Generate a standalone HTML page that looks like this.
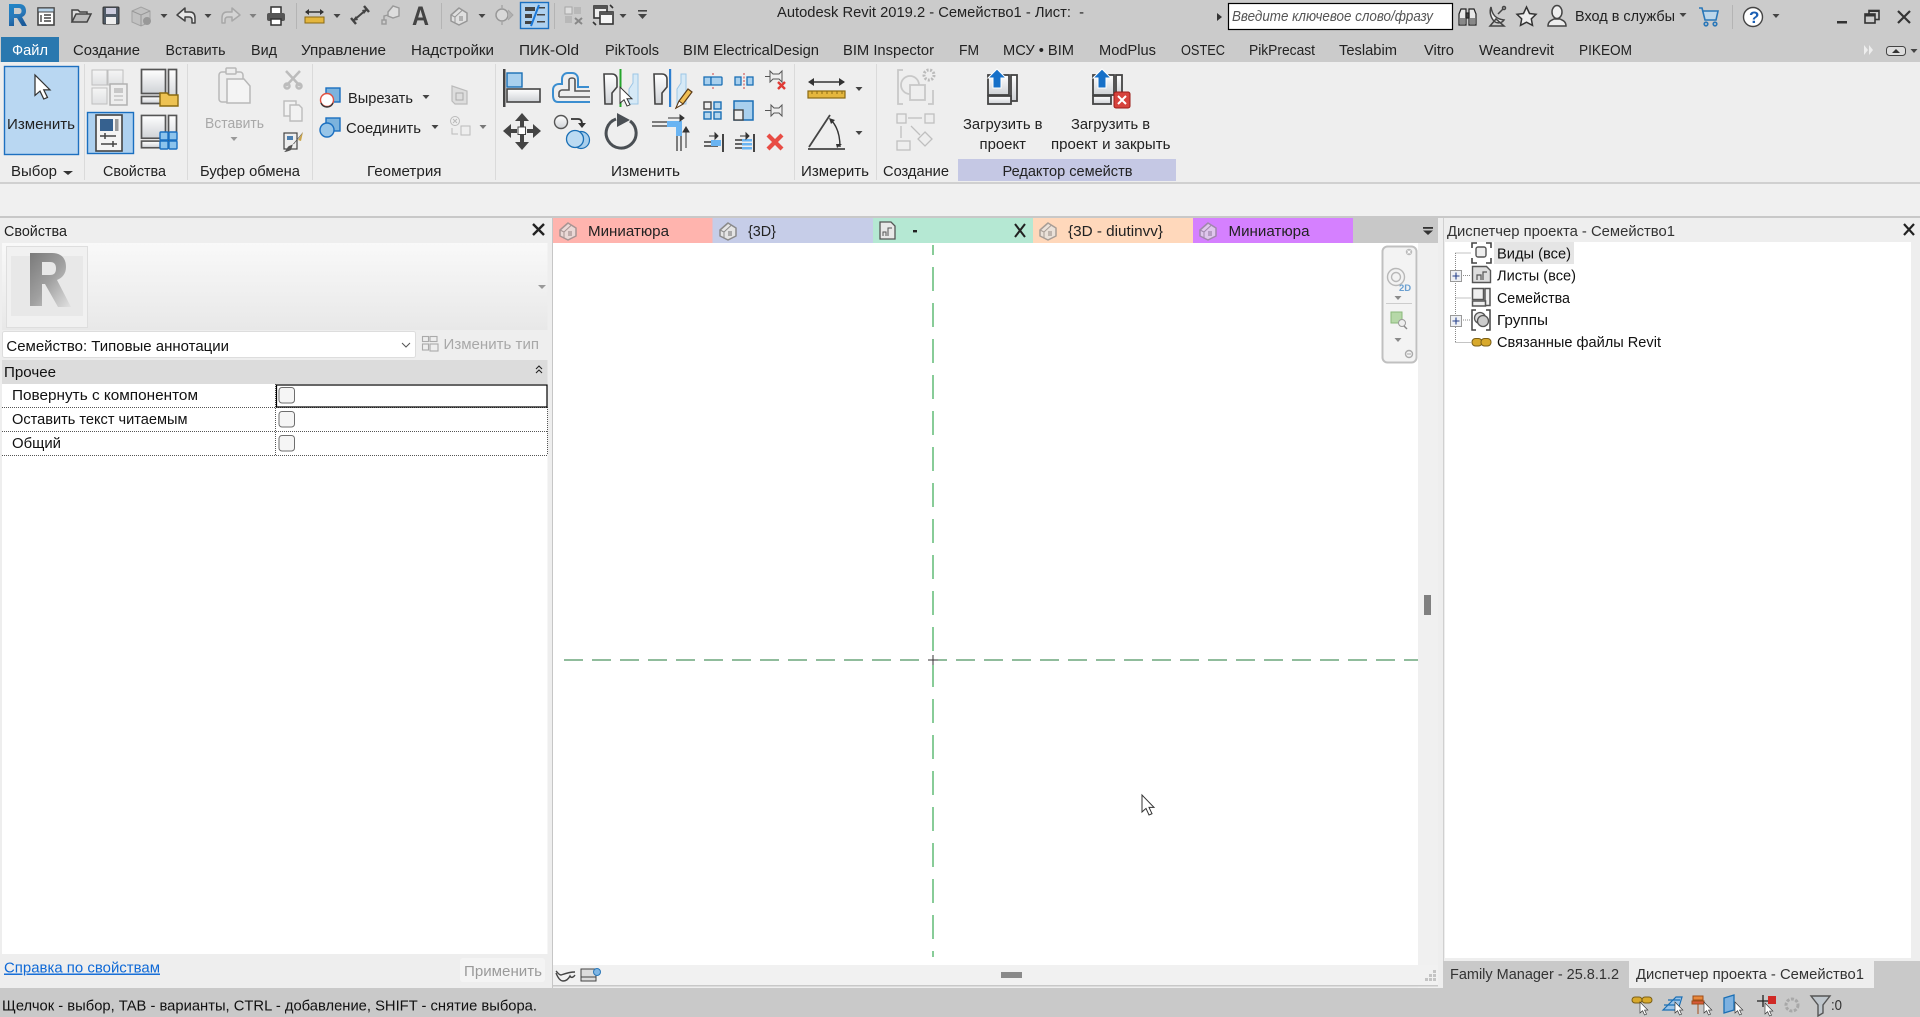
<!DOCTYPE html>
<html><head><meta charset="utf-8"><title>Revit</title>
<style>
html,body{margin:0;padding:0;background:#eee;overflow:hidden}
svg{display:block}
text{font-family:"Liberation Sans","DejaVu Sans",sans-serif;font-size:14.5px;fill:#222}
</style></head><body>
<svg xmlns="http://www.w3.org/2000/svg" width="1920" height="1017" viewBox="0 0 1920 1017">
<defs>
<linearGradient id="m" x1="0" y1="0" x2="0" y2="1"><stop offset="0" stop-color="#fff"/><stop offset="1" stop-color="#cfd2d6"/></linearGradient>
<linearGradient id="b" x1="0" y1="0" x2="0" y2="1"><stop offset="0" stop-color="#d3e6f5"/><stop offset="1" stop-color="#8fbfe6"/></linearGradient>
<linearGradient id="r" x1="0" y1="0" x2="0.4" y2="1"><stop offset="0" stop-color="#1f86c8"/><stop offset=".6" stop-color="#2a78b8"/><stop offset="1" stop-color="#1a5a9a"/></linearGradient>
<linearGradient id="pv" x1="0" y1="0" x2="0" y2="1"><stop offset="0" stop-color="#f9f9f9"/><stop offset="1" stop-color="#e8e8e8"/></linearGradient>
<linearGradient id="gr" x1="0" y1="0" x2="1" y2="1"><stop offset="0" stop-color="#7a7a7a"/><stop offset=".5" stop-color="#a0a0a0"/><stop offset="1" stop-color="#e2e2e2"/></linearGradient>
<path id="tri" d="M-3.500 0H3.500L0 4Z" fill="#444"/>
<path id="cur" d="M0 0V17L4 13.400 7 20 10 18.700 7 12.400H12Z" fill="#fff" stroke="#333" stroke-width="1"/>
<g id="house"><path d="M1 9 9 2 17 7V15L9 19 1 15Z" fill="#e4e4e4" stroke="#8a8a8a" stroke-width="1.500" stroke-linejoin="round"/><path d="M1 9 5 11 12 4.500M5 11V17" fill="none" stroke="#8a8a8a" stroke-width="1"/><rect x="9" y="10" width="4" height="5" fill="#aaa"/></g>
<g id="famL"><rect x="1" y="1" width="24" height="24" fill="url(#m)" stroke="#555" stroke-width="1.700"/><rect x="28" y="1" width="8" height="31" fill="url(#m)" stroke="#555" stroke-width="1.700"/><rect x="1" y="28" width="27" height="7" fill="url(#m)" stroke="#555" stroke-width="1.700"/></g>
<g id="upar"><path d="M9 0 18 9H13V19H5V9H0Z" fill="#1670c8" stroke="#fff" stroke-width="1"/></g>
</defs>

<!-- base -->
<rect width="1920" height="1017" fill="#eeeeee"/>
<rect width="1920" height="62" fill="#cbcbcb"/>
<rect y="62" width="1920" height="120" fill="#eeeeee"/>
<rect y="182" width="1920" height="2" fill="#d0d0d0"/>
<rect y="184" width="1920" height="32" fill="#f0f0f0"/>
<rect y="216" width="1920" height="2" fill="#c8c8c8"/>

<!-- quick access -->
<path d="M9 4h10c5 0 7 3 7 7 0 3-1.500 5-4 6l5 9h-5l-5-8h-3v8H9zM14 8v6h4.500c2 0 3-1 3-3s-1-3-3-3z" fill="url(#r)" fill-rule="evenodd"/>
<g><rect x="38" y="8" width="16" height="17" fill="#fff" stroke="#444" stroke-width="1.600"/><rect x="38" y="8" width="16" height="4" fill="#b8d4ea" stroke="#444"/><path d="M41 15v7M44 15h7M44 18h7M44 21h7" stroke="#444" stroke-width="1.400"/></g>
<g><path d="M72 22V10h6l2 2h7v3" fill="#ddd" stroke="#444" stroke-width="1.500"/><path d="M72 22l4-8h15l-4 8z" fill="#bbb" stroke="#444" stroke-width="1.500"/></g>
<g><rect x="103" y="7" width="16" height="17" rx="1" fill="#4f5a66" stroke="#333"/><rect x="106" y="8" width="10" height="6" fill="#ccd"/><rect x="106" y="17" width="10" height="7" fill="#eee"/></g>
<g opacity=".6"><path d="M132 11 141 7 150 11V22L141 26 132 22Z" fill="#bbb" stroke="#888"/><path d="M132 11 141 15 150 11M141 15V26" stroke="#777" fill="none"/><circle cx="147" cy="21" r="4" fill="#777"/></g>
<use href="#tri" x="164" y="14"/>
<path d="M177 15 185 8V12H190C194 12 195 15 195 18V23H192V20C192 18 191 17 189 17H185V21Z" fill="#e8e8e8" stroke="#444" stroke-width="1.500" stroke-linejoin="round"/>
<use href="#tri" x="208" y="14"/>
<path d="M240 15 232 8V12H227C223 12 222 15 222 18V23H225V20C225 18 226 17 228 17H232V21Z" fill="#d4d4d4" stroke="#a8a8a8" stroke-width="1.500" stroke-linejoin="round"/>
<use href="#tri" x="253" y="14" opacity=".55"/>
<g><rect x="271" y="7" width="10" height="7" fill="#fff" stroke="#333" stroke-width="1.500"/><rect x="267" y="13" width="18" height="8" rx="2" fill="#555"/><rect x="271" y="19" width="10" height="6" fill="#fff" stroke="#333" stroke-width="1.500"/></g>
<rect x="296" y="3" width="1" height="26" fill="#b4b4b4"/>
<g><path d="M306 12h17" stroke="#333" stroke-width="1.600"/><path d="M305 12l4-3v6zM324 12l-4-3v6z" fill="#333"/><rect x="305" y="17" width="19" height="6" fill="#e4b63e" stroke="#8a6a14"/></g>
<use href="#tri" x="337" y="14"/>
<g stroke="#444" stroke-width="2"><path d="M353 21 367 9"/><path d="M351 18l5 6M364 6l5 6" stroke-width="2.400"/></g>
<path d="M352 21l6-1-2-4zM368 9l-6 1 2 4z" fill="#444"/>
<g fill="none" stroke="#999" stroke-width="1.400"><path d="M384 22V16l4-1"/><rect x="382" y="20" width="4" height="4" fill="#ccc"/><path d="M388 12l5-6 6 2v8l-6 2-5-2z" fill="#ddd"/></g>
<text x="412" y="25" style="font-size:27px;font-weight:bold;fill:#444" textLength="17" lengthAdjust="spacingAndGlyphs">A</text>
<rect x="441" y="3" width="1" height="26" fill="#b4b4b4"/>
<use href="#house" x="450" y="6" opacity=".8"/>
<use href="#tri" x="482" y="14"/>
<g opacity=".75"><circle cx="502" cy="15" r="6" fill="#ddd" stroke="#888" stroke-width="1.500"/><path d="M508 10l5 5-5 5" fill="#aaa" stroke="#999"/><path d="M502 5v4M502 21v4" stroke="#999" stroke-width="1.400"/></g>
<rect x="520.500" y="2.500" width="28" height="26" fill="#aed1f0" stroke="#1a6fc0" stroke-width="1.400"/>
<g fill="#444"><rect x="525" y="7" width="10" height="4"/><rect x="525" y="14" width="7" height="4"/><rect x="525" y="21" width="7" height="3"/><rect x="537" y="7" width="8" height="1.500"/><rect x="537" y="14" width="8" height="1.500"/><rect x="537" y="21" width="8" height="1.500"/></g>
<path d="M539 5 531 26" stroke="#1a78d8" stroke-width="2"/>
<rect x="554" y="3" width="1" height="26" fill="#b4b4b4"/>
<g opacity=".55"><rect x="565" y="7" width="7" height="7" fill="#eee" stroke="#888"/><rect x="574" y="7" width="7" height="7" fill="#aaa"/><rect x="565" y="16" width="7" height="7" fill="#aaa"/></g>
<path d="M575 18l7 6M582 18l-7 6" stroke="#888" stroke-width="2"/>
<g fill="none" stroke="#333" stroke-width="1.600"><rect x="594" y="6" width="13" height="12" fill="#eee"/><rect x="600" y="12" width="13" height="12" fill="#f6f6f6"/><path d="M610 5l3 3M593 22l3 3"/></g>
<rect x="600" y="12" width="13" height="3" fill="#555"/><rect x="594" y="6" width="13" height="3" fill="#555"/>
<use href="#tri" x="623" y="14"/>
<rect x="638" y="10" width="9" height="1.600" fill="#444"/><path d="M638 14h9l-4.500 5z" fill="#444"/>

<!-- title -->
<text x="777" y="17" textLength="307" lengthAdjust="spacingAndGlyphs">Autodesk Revit 2019.2 - Семейство1 - Лист:&#160;&#160;-</text>
<path d="M1217 13l5 4-5 4z" fill="#333"/>
<rect x="1228.500" y="3.500" width="224" height="26" fill="#fff" stroke="#000" stroke-width="1.200"/>
<text x="1232" y="21" style="font-style:italic;fill:#555" textLength="201" lengthAdjust="spacingAndGlyphs">Введите ключевое слово/фразу</text>
<g stroke="#222" stroke-width="1.200" fill="#e8e8e8"><path d="M1459 14l2-5h5v16h-7zM1476 14l-2-5h-5v16h7z"/><rect x="1466" y="13" width="3" height="5" fill="#444"/></g>
<path d="M1460 18h5v6h-5zM1470 18h5v6h-5z" fill="#888"/>
<g fill="none" stroke="#444" stroke-width="1.500"><path d="M1491 7c1 8 5 12 13 13-2 3-7 4-10 1-3-3-5-9-3-14z" fill="#eee"/><path d="M1490 26l6-7 8 7zM1498 14l5-5"/><circle cx="1504" cy="8" r="1.500"/></g>
<path d="M1526.500 7l3 6.500 6.500.8-4.700 4.600 1.200 6.500-6-3.200-6 3.200 1.200-6.500-4.700-4.600 6.500-.8z" fill="#eee" stroke="#333" stroke-width="1.500"/>
<g fill="none" stroke="#444" stroke-width="1.500"><ellipse cx="1557" cy="12" rx="5" ry="6.500" fill="#eee"/><path d="M1548 26c0-5 4-6 6-7h6c2 1 6 2 6 7z" fill="#eee"/></g>
<text x="1575" y="21" textLength="100" lengthAdjust="spacingAndGlyphs">Вход в службы</text>
<use href="#tri" x="1683" y="13"/>
<g fill="none" stroke="#2a77b8" stroke-width="1.600"><path d="M1699 8h3l3 12h11l2-9h-15" fill="#bcd6ea"/><circle cx="1706" cy="24" r="1.800"/><circle cx="1715" cy="24" r="1.800"/></g>
<rect x="1732" y="5" width="1" height="24" fill="#b4b4b4"/>
<circle cx="1753" cy="17" r="9.500" fill="#fff" stroke="#444" stroke-width="1.400"/>
<text x="1749" y="23" style="font-size:17px;font-weight:bold;fill:#1a5fb4">?</text>
<use href="#tri" x="1776" y="14"/>
<rect x="1837" y="21" width="10" height="2.500" fill="#333"/>
<g fill="none" stroke="#333" stroke-width="1.600"><rect x="1869" y="10.500" width="10" height="9"/><rect x="1865" y="14" width="10" height="9" fill="#cbcbcb"/></g>
<rect x="1865" y="14" width="10" height="2.500" fill="#333"/><rect x="1869" y="10" width="10" height="2" fill="#333"/>
<path d="M1898 11l12 12M1910 11l-12 12" stroke="#333" stroke-width="2.200"/>

<!-- menu tabs -->
<rect x="1" y="37" width="58" height="25" fill="#2a78af"/>
<text x="12" y="55" style="fill:#fff" textLength="36" lengthAdjust="spacingAndGlyphs">Файл</text>
<g>
<text x="73" y="55" textLength="67" lengthAdjust="spacingAndGlyphs">Создание</text>
<text x="165.500" y="55" textLength="60" lengthAdjust="spacingAndGlyphs">Вставить</text>
<text x="251" y="55" textLength="26" lengthAdjust="spacingAndGlyphs">Вид</text>
<text x="301" y="55" textLength="85" lengthAdjust="spacingAndGlyphs">Управление</text>
<text x="411" y="55" textLength="83" lengthAdjust="spacingAndGlyphs">Надстройки</text>
<text x="519" y="55" textLength="60" lengthAdjust="spacingAndGlyphs">ПИК-Old</text>
<text x="605" y="55" textLength="54" lengthAdjust="spacingAndGlyphs">PikTools</text>
<text x="683" y="55" textLength="136" lengthAdjust="spacingAndGlyphs">BIM ElectricalDesign</text>
<text x="843" y="55" textLength="91" lengthAdjust="spacingAndGlyphs">BIM Inspector</text>
<text x="959" y="55" textLength="20" lengthAdjust="spacingAndGlyphs">FM</text>
<text x="1003" y="55" textLength="71" lengthAdjust="spacingAndGlyphs">МСУ • BIM</text>
<text x="1099" y="55" textLength="57" lengthAdjust="spacingAndGlyphs">ModPlus</text>
<text x="1181" y="55" textLength="44" lengthAdjust="spacingAndGlyphs">OSTEC</text>
<text x="1249" y="55" textLength="66" lengthAdjust="spacingAndGlyphs">PikPrecast</text>
<text x="1339" y="55" textLength="58" lengthAdjust="spacingAndGlyphs">Teslabim</text>
<text x="1424" y="55" textLength="30" lengthAdjust="spacingAndGlyphs">Vitro</text>
<text x="1479" y="55" textLength="75" lengthAdjust="spacingAndGlyphs">Weandrevit</text>
<text x="1579" y="55" textLength="53" lengthAdjust="spacingAndGlyphs">PIKEOM</text>
</g>
<path d="M1864 45l4 5-4 5zM1869 45l4 5-4 5z" fill="#eee"/>
<rect x="1886.500" y="46.500" width="19" height="9" rx="3" fill="#ddd" stroke="#444"/><path d="M1892 53h8l-4-4z" fill="#333"/>
<use href="#tri" x="1914" y="49"/>

<!-- ribbon separators -->
<g fill="#dadada"><rect x="84" y="64" width="1" height="116"/><rect x="187" y="64" width="1" height="116"/><rect x="312" y="64" width="1" height="116"/><rect x="495" y="64" width="1" height="116"/><rect x="794" y="64" width="1" height="116"/><rect x="876" y="64" width="1" height="116"/></g>

<!-- Выбор -->
<rect x="4.500" y="66.500" width="74" height="88" fill="#b9d7f2" stroke="#1e70c0" stroke-width="1.400"/>
<use href="#cur" transform="translate(35 75) scale(1.250 1.200)"/>
<text x="7" y="129" textLength="68" lengthAdjust="spacingAndGlyphs">Изменить</text>
<text x="11" y="176" textLength="46" lengthAdjust="spacingAndGlyphs">Выбор</text>
<path d="M63 171h10l-5 4z" fill="#333"/>

<!-- Свойства -->
<g opacity=".45"><rect x="92" y="70" width="15" height="15" fill="url(#m)" stroke="#888"/><rect x="108" y="70" width="15" height="15" fill="url(#m)" stroke="#888"/><rect x="92" y="88" width="15" height="16" fill="url(#m)" stroke="#888"/><rect x="110" y="84" width="17" height="21" fill="#eee" stroke="#666" stroke-width="1.500"/><path d="M114 96h9M114 100h9" stroke="#666"/><rect x="114" y="88" width="9" height="5" fill="#999"/></g>
<use href="#famL" transform="translate(140.500 68.500)"/>
<path d="M160 93h7l2 2h9v11h-18z" fill="#edc252" stroke="#8a6a10" stroke-width="1.400"/>
<rect x="87.500" y="112.500" width="46" height="41" fill="#aed1f0" stroke="#1a6fc0" stroke-width="1.400"/>
<rect x="96" y="115" width="26" height="36" fill="#f4f4f4" stroke="#444" stroke-width="1.600"/>
<rect x="100" y="119" width="13" height="12" fill="#36618f"/><rect x="115" y="119" width="3.500" height="12" fill="#999"/>
<g stroke="#444" stroke-width="1.500"><path d="M100 136h16M101 144h16M105 133v6M113 141v6"/></g>
<use href="#famL" transform="translate(140.500 114.500) scale(1 .95)"/>
<g fill="#8cc3ec" stroke="#1a6fc0" stroke-width="1.400"><rect x="160" y="132" width="8" height="8" rx="1"/><rect x="169" y="132" width="8" height="8" rx="1"/><rect x="160" y="141" width="8" height="8" rx="1"/><rect x="169" y="141" width="8" height="8" rx="1"/></g>
<text x="103" y="176" textLength="63" lengthAdjust="spacingAndGlyphs">Свойства</text>

<!-- Буфер -->
<g fill="#eee" stroke="#b8b8b8" stroke-width="1.500"><rect x="219" y="72" width="24" height="30" rx="3"/><rect x="226" y="68" width="10" height="6" rx="1"/><path d="M227 79h17l6 7v17h-23z" fill="#f4f4f4"/></g>
<text x="205" y="128" style="fill:#a8a8a8" textLength="59" lengthAdjust="spacingAndGlyphs">Вставить</text>
<use href="#tri" x="234" y="137" opacity=".5"/>
<g stroke="#bcbcbc" stroke-width="2.500" fill="none"><path d="M286 71 300 86M300 71 286 86"/><circle cx="287" cy="86" r="2.500"/><circle cx="299" cy="86" r="2.500"/></g>
<g fill="#f2f2f2" stroke="#bcbcbc" stroke-width="1.400"><rect x="284" y="101" width="12" height="15"/><path d="M290 105h9l3 3v13h-12z"/></g>
<rect x="284" y="133" width="13" height="16" fill="#eee" stroke="#444" stroke-width="1.200"/><rect x="287" y="136" width="6" height="4" fill="#4c7fb0"/>
<path d="M303 132 293 144l-2 6c-2 1-5 2-7 2 3-2 3-5 5-6 3-1 4-2 5-2l8-10z" fill="#555"/><path d="M303 132l-5 8 3 1z" fill="#caa44a"/>
<text x="200" y="176" textLength="100" lengthAdjust="spacingAndGlyphs">Буфер обмена</text>

<!-- Геометрия -->
<rect x="326" y="88" width="14" height="14" fill="#7cb3dd" stroke="#1a6fc0" stroke-width="1.400"/>
<circle cx="327" cy="100" r="6.500" fill="#fff" stroke="#e05040" stroke-width="1.400"/>
<path d="M321 103a6.500 6.500 0 0 0 12 0" fill="none" stroke="#333" stroke-width="1.400"/>
<text x="348" y="103" textLength="65" lengthAdjust="spacingAndGlyphs">Вырезать</text>
<use href="#tri" x="426" y="95"/>
<path d="M452 86l15 5v13h-12l-3-3z" fill="#ddd" stroke="#bbb" stroke-width="1.200"/><rect x="456" y="93" width="7" height="7" fill="none" stroke="#aaa"/>
<rect x="326" y="118" width="14" height="13" fill="#7cb3dd" stroke="#1a6fc0" stroke-width="1.400"/>
<circle cx="327" cy="130" r="7" fill="#97c5e8" stroke="#1a6fc0" stroke-width="1.400"/>
<text x="346" y="133" textLength="75" lengthAdjust="spacingAndGlyphs">Соединить</text>
<use href="#tri" x="435" y="125"/>
<circle cx="455" cy="121" r="4.500" fill="#eee" stroke="#bbb"/><path d="M453 119l4 4M457 119l-4 4" stroke="#bbb"/><rect x="461" y="126" width="9" height="9" fill="#eee" stroke="#bbb"/><path d="M452 128v6h6" fill="none" stroke="#bbb"/>
<use href="#tri" x="483" y="125" opacity=".7"/>
<text x="367" y="176" textLength="74.500" lengthAdjust="spacingAndGlyphs">Геометрия</text>

<!-- Изменить: big -->
<rect x="503" y="69" width="2.500" height="38" fill="#444"/>
<rect x="507" y="73" width="15" height="14" fill="#a9d0ee" stroke="#1a6fb5" stroke-width="1.400"/>
<rect x="507" y="89" width="33" height="13" fill="url(#m)" stroke="#444" stroke-width="1.600"/>
<path d="M553 95v-5c0-4 3-6 6-6h3v-5c0-3 2-6 6-6h4c4 0 6 3 6 6v8h11M590 102h-32c-4 0-5-3-5-7" fill="none" stroke="#3b8ed0" stroke-width="2"/>
<path d="M559 97v-4c0-2 2-3 3-3h7v-10c0-1 1-2 3-2s3 1 3 2v11h15M590 97h-31" fill="none" stroke="#555" stroke-width="1.600"/>
<path d="M604 74h8c3 0 5 2 5 5v8l-5 6v11h-7z" fill="url(#m)" stroke="#444" stroke-width="1.600"/>
<path d="M638 74v30h-9V89l4-6v-9z" fill="#d6e9f6" stroke="#9cc6e6"/>
<rect x="619.500" y="69" width="2" height="38" fill="#26a52c"/>
<use href="#cur" transform="translate(620 87) scale(1 .95)"/>
<path d="M654 74h8c3 0 5 2 5 5v8l-5 6v11h-7z" fill="url(#m)" stroke="#444" stroke-width="1.600"/>
<path d="M686 74v30h-9V89l4-6v-9z" fill="#d6e9f6" stroke="#9cc6e6"/>
<rect x="669" y="69" width="2.200" height="38" fill="#2d7fd0"/>
<path d="M676 108l3-7 9-12 4 3-9 12z" fill="#f0bf55" stroke="#5c3b18" stroke-width="1.200"/><path d="M676 108l3-7 4 3z" fill="#fff" stroke="#5c3b18"/>
<!-- move -->
<g fill="#444"><path d="M522 113l7 8h-5v8h-4v-8h-5z"/><path d="M522 150l7-8h-5v-8h-4v8h-5z"/><path d="M503 131l8-7v5h6v4h-6v5z"/><path d="M541 131l-8-7v5h-6v4h6v5z"/></g>
<rect x="518" y="127" width="7.500" height="7.500" fill="#fff" stroke="#444"/>
<!-- copy -->
<circle cx="561" cy="122" r="6.500" fill="url(#m)" stroke="#555" stroke-width="1.400"/>
<path d="M571 119h7c3 0 4 2 4 5v1" fill="none" stroke="#333" stroke-width="1.800"/><path d="M578 123h8l-4 5z" fill="#333"/>
<circle cx="581" cy="140" r="8.500" fill="#a9cfec" stroke="#1a6fb5" stroke-width="1.200"/>
<circle cx="575" cy="139" r="8.500" fill="#bcdbf2" stroke="#1a6fb5" stroke-width="1.300"/>
<!-- rotate -->
<path d="M630 121A15 15 0 1 1 616 119" fill="none" stroke="#4a4f54" stroke-width="3"/>
<path d="M617 113l13 7-13 7z" fill="#4a4f54"/>
<!-- trim -->
<g fill="none" stroke="#555" stroke-width="1.500"><path d="M652 122h28M652 126h28"/><path d="M677 131V151M681 131V151"/></g>
<rect x="667" y="121" width="11" height="6" fill="#6ab4f2"/><rect x="676" y="121" width="6" height="15" fill="#6ab4f2"/>
<path d="M668 118h16M684 118l-4-3v6z" stroke="#333" fill="#333"/><path d="M686 148V129M686 127l-3 5h6z" stroke="#333" fill="#333"/>
<!-- small grid -->
<g stroke="#d04040" stroke-width="1" stroke-dasharray="2 1.500"><path d="M713 73V90M744 73V90"/></g>
<rect x="704" y="77" width="7" height="8" fill="#a9d0ee" stroke="#1a6fb5" stroke-width="1.300"/><rect x="711" y="77" width="11" height="8" fill="#a9d0ee" stroke="#1a6fb5" stroke-width="1.300" rx="1"/>
<rect x="735" y="77" width="6" height="8" fill="#a9d0ee" stroke="#1a6fb5" stroke-width="1.300"/><rect x="747" y="77" width="6" height="8" fill="#a9d0ee" stroke="#1a6fb5" stroke-width="1.300"/>
<path d="M770 71l3 3h6l3-3v11l-3-3h-6l-3 3z" fill="#eee" stroke="#555"/><path d="M765 76.500h5" stroke="#555"/>
<path d="M778 82l7 7M785 82l-7 7" stroke="#e03a35" stroke-width="2.400"/>
<g fill="#b5d6ee" stroke="#1a6fb5" stroke-width="1.400"><rect x="704" y="102" width="7" height="7" fill="#eee" stroke="#444"/><rect x="714" y="102" width="7" height="7"/><rect x="704" y="112" width="7" height="7"/><rect x="714" y="112" width="7" height="7"/></g>
<rect x="734" y="101" width="19" height="19" fill="#a9d0ee" stroke="#1a6fb5" stroke-width="1.500"/><rect x="734" y="110" width="9" height="10" fill="#eee" stroke="#444" stroke-width="1.400"/>
<path d="M771 105l3 3h5l3-3v11l-3-3h-5l-3 3z" fill="#eee" stroke="#555"/><path d="M765 110.500h6" stroke="#555"/>
<g><path d="M704 142h14" stroke="#666" stroke-width="2"/><path d="M704 146h14" stroke="#666" stroke-width="2"/><rect x="711" y="140" width="10" height="6" fill="#6ab4f2"/><rect x="722" y="134" width="2" height="18" fill="#444"/><path d="M709 136h9M718 136l-3-3v6z" stroke="#333" fill="#333"/></g>
<g><path d="M735 140h14M735 144h14M735 148h14" stroke="#666" stroke-width="2"/><rect x="742" y="139" width="10" height="2.500" fill="#6ab4f2"/><rect x="742" y="143" width="10" height="2.500" fill="#6ab4f2"/><rect x="742" y="147" width="10" height="2.500" fill="#6ab4f2"/><rect x="753" y="134" width="2" height="18" fill="#444"/><path d="M740 136h9M749 136l-3-3v6z" stroke="#333" fill="#333"/></g>
<path d="M768 135l14 14M782 135l-14 14" stroke="#e84c44" stroke-width="4.200"/>
<text x="611" y="176" textLength="69" lengthAdjust="spacingAndGlyphs">Изменить</text>

<!-- Измерить -->
<path d="M810 82h34" stroke="#333" stroke-width="1.600"/><path d="M808 82l6-4v8zM845 82l-6-4v8z" fill="#333"/>
<rect x="808" y="91" width="37" height="7" fill="#e4b63e" stroke="#8a6a14" stroke-width="1.200"/>
<path d="M812 91v3M817 91v3M822 91v3M827 91v3M832 91v3M837 91v3M842 91v3" stroke="#8a6a14"/>
<use href="#tri" x="859" y="87"/>
<path d="M808 149h37M809 147 830 115" stroke="#444" stroke-width="1.800" fill="none"/>
<path d="M831 120c6 6 9 16 9 27" fill="none" stroke="#333" stroke-width="1.400"/><path d="M829 118l6 2-4 4zM837 148l5-4h-6z" fill="#333"/>
<use href="#tri" x="859" y="131"/>
<text x="801" y="176" textLength="68" lengthAdjust="spacingAndGlyphs">Измерить</text>

<!-- Создание -->
<g opacity=".55" fill="none" stroke="#aaa" stroke-width="1.800"><path d="M903 70h-5v34h5M928 104h5v-14"/><circle cx="910" cy="85" r="9"/><rect x="910" y="85" width="15" height="15" fill="#eee"/></g>
<circle cx="929" cy="75" r="5" fill="none" stroke="#bbb" stroke-width="3" stroke-dasharray="2 1.500"/>
<g opacity=".55" fill="#eee" stroke="#999" stroke-width="1.300"><rect x="897" y="114" width="9" height="9"/><rect x="925" y="114" width="9" height="9"/><rect x="897" y="141" width="13" height="9"/><path d="M925 132l7 7-7 7-7-7z"/><path d="M908 118h14M901 126v12M911 126l9 9"/></g>
<text x="883" y="176" textLength="66" lengthAdjust="spacingAndGlyphs">Создание</text>

<!-- Загрузить -->
<rect x="958" y="159" width="218" height="22" fill="#c5c8e4"/>
<text x="1002.500" y="176" textLength="130" lengthAdjust="spacingAndGlyphs">Редактор семейств</text>
<g fill="url(#m)" stroke="#444" stroke-width="1.800"><rect x="988" y="75" width="21" height="20"/><rect x="1011" y="75" width="6" height="26"/><rect x="988" y="96" width="23" height="8"/></g>
<use href="#upar" transform="translate(988 69)"/>
<text x="963" y="129" textLength="79.500" lengthAdjust="spacingAndGlyphs">Загрузить в</text>
<text x="979.500" y="149" textLength="46.500" lengthAdjust="spacingAndGlyphs">проект</text>
<g fill="url(#m)" stroke="#444" stroke-width="1.800"><rect x="1093" y="75" width="21" height="20"/><rect x="1116" y="75" width="6" height="20"/><rect x="1093" y="96" width="18" height="8"/></g>
<use href="#upar" transform="translate(1093 69)"/>
<rect x="1114" y="92" width="16" height="16" rx="2" fill="#d6423c" stroke="#9c1c18"/>
<path d="M1118 96l8 8M1126 96l-8 8" stroke="#fff" stroke-width="2"/>
<text x="1071" y="129" textLength="79" lengthAdjust="spacingAndGlyphs">Загрузить в</text>
<text x="1051" y="149" textLength="119.500" lengthAdjust="spacingAndGlyphs">проект и закрыть</text>

<!-- Properties panel -->
<text x="4" y="236" textLength="63" lengthAdjust="spacingAndGlyphs">Свойства</text>
<path d="M533 224l11 11M544 224l-11 11" stroke="#222" stroke-width="2.400"/>
<rect x="2" y="243" width="545.500" height="87" fill="url(#pv)"/>
<rect x="6.500" y="246.500" width="81" height="81" fill="#f1f1f1" stroke="#dedede"/>
<rect x="11" y="256" width="72" height="60" fill="#e6e6e6" opacity=".8"/>
<path d="M30 253h22c9 0 14 5 14 14 0 7-4 11-9 13l14 27H58L45 284h-3v22H30zM42 262v13h8c4 0 6-2 6-6.500s-2-6.500-6-6.500z" fill="url(#gr)" fill-rule="evenodd"/>
<path d="M538 285h8l-4 4z" fill="#999"/>
<rect x="2.500" y="331.500" width="413" height="26" rx="2" fill="#fff" stroke="#ddd"/>
<text x="6.400" y="351" style="fill:#111" textLength="222.600" lengthAdjust="spacingAndGlyphs">Семейство: Типовые аннотации</text>
<path d="M402 343l4 4 4-4" fill="none" stroke="#555"/>
<g fill="none" stroke="#aaa" stroke-width="1.100"><rect x="422.500" y="336.500" width="6" height="5"/><rect x="430" y="336.500" width="7" height="5"/><rect x="422.500" y="344" width="6" height="6"/><rect x="430" y="344" width="8" height="7"/></g>
<text x="443.500" y="349" style="fill:#a8a8a8" textLength="95.500" lengthAdjust="spacingAndGlyphs">Изменить тип</text>
<rect x="2" y="360" width="545.500" height="24" fill="#dcdcdc"/>
<text x="4" y="377" style="fill:#111" textLength="52" lengthAdjust="spacingAndGlyphs">Прочее</text>
<path d="M536 369l3-3 3 3M536 373l3-3 3 3" fill="none" stroke="#222" stroke-width="1.100"/>
<rect x="2" y="384" width="545.500" height="570" fill="#fff"/>
<g stroke="#555" stroke-width="1" stroke-dasharray="1 1"><path d="M2 407.500H547M2 431.500H547M2 455.500H547M275.500 384V455M547.500 407V455"/></g>
<rect x="276.500" y="385" width="270.500" height="22" fill="#fff" stroke="#000" stroke-width="1.200"/>
<text x="12" y="400" style="fill:#111" textLength="186" lengthAdjust="spacingAndGlyphs">Повернуть с компонентом</text>
<text x="12" y="424" style="fill:#111" textLength="175.500" lengthAdjust="spacingAndGlyphs">Оставить текст читаемым</text>
<text x="12" y="448" style="fill:#111" textLength="49" lengthAdjust="spacingAndGlyphs">Общий</text>
<g fill="#f5f5f5" stroke="#6e6e6e" stroke-width="1"><rect x="279" y="387.500" width="15.500" height="15.500" rx="3"/><rect x="279" y="411.500" width="15.500" height="15.500" rx="3"/><rect x="279" y="435.500" width="15.500" height="15.500" rx="3"/></g>
<text x="4" y="972.500" style="fill:#0f69d6;text-decoration:underline" textLength="156" lengthAdjust="spacingAndGlyphs">Справка по свойствам</text>
<rect x="460" y="958" width="85" height="24" rx="3" fill="#f4f4f4"/>
<text x="464" y="976" style="fill:#9a9a9a" textLength="78" lengthAdjust="spacingAndGlyphs">Применить</text>

<!-- View area -->
<rect x="552" y="218" width="1" height="770" fill="#c6c6c6"/>
<rect x="553" y="218" width="885" height="25" fill="#c8c8c8"/>
<rect x="553" y="218" width="159.500" height="25" fill="#ffb4ae"/>
<rect x="712.500" y="218" width="160.500" height="25" fill="#c6cde8"/>
<rect x="873" y="218" width="160" height="25" fill="#b5e8d3"/>
<rect x="1033" y="218" width="160" height="25" fill="#ffd8bb"/>
<rect x="1193" y="218" width="160" height="25" fill="#d580ff"/>
<use href="#house" transform="translate(559 221)" opacity=".75"/>
<use href="#house" transform="translate(719 221)"/>
<use href="#house" transform="translate(1039 221)" opacity=".75"/>
<use href="#house" transform="translate(1199 221)" opacity=".7"/>
<path d="M880 222h11l4 4v13h-15z" fill="#e8e8e8" stroke="#555" stroke-width="1.300"/><path d="M883 236v-4h3v4M888 236v-8h4" fill="none" stroke="#555"/>
<text x="588" y="236" textLength="81" lengthAdjust="spacingAndGlyphs">Миниатюра</text>
<text x="748" y="236" textLength="28" lengthAdjust="spacingAndGlyphs">{3D}</text>
<rect x="913" y="230" width="4" height="2.400" fill="#222"/>
<path d="M1015 224l10 13M1025 224l-10 13" stroke="#222" stroke-width="2"/>
<text x="1068" y="236" textLength="95" lengthAdjust="spacingAndGlyphs">{3D - diutinvv}</text>
<text x="1228.500" y="236" textLength="81" lengthAdjust="spacingAndGlyphs">Миниатюра</text>
<rect x="1423" y="227" width="10" height="1.800" fill="#333"/><path d="M1423 230.500h10l-5 4.500z" fill="#333"/>

<rect x="553" y="243" width="885" height="722" fill="#fff"/>
<rect x="1418" y="243" width="20" height="745" fill="#f0f0f0"/>
<rect x="553" y="965" width="885" height="20" fill="#f1f1f1"/>
<rect x="553" y="985" width="885" height="1.500" fill="#c8c8c8"/>
<rect x="1424" y="595" width="7" height="20" fill="#808080"/>
<rect x="1001" y="972" width="21" height="6" fill="#8a8a8a"/>
<g fill="#c4c4c4"><rect x="1425" y="978" width="3" height="3"/><rect x="1429" y="978" width="3" height="3"/><rect x="1433" y="978" width="3" height="3"/><rect x="1429" y="974" width="3" height="3"/><rect x="1433" y="974" width="3" height="3"/><rect x="1433" y="970" width="3" height="3"/></g>
<g fill="none" stroke="#444" stroke-width="1.400"><path d="M556 971c2 2 3 4 5 4 3-1 8-3 14-3M556 973c2 5 4 8 7 8 4 0 6-3 7-5 1 2 3 2 5-1"/></g>
<rect x="581" y="969" width="15" height="12" fill="#ddd" stroke="#444"/><path d="M581 977h15" stroke="#444"/><circle cx="597" cy="972" r="3.500" fill="#7fb6e4" stroke="#2a77b8"/>

<!-- crosshair -->
<path d="M933 245V957" fill="none" stroke="#109a30" stroke-width="1" stroke-dasharray="24 12" stroke-dashoffset="14"/>
<path d="M564 660H1418" fill="none" stroke="#217a38" stroke-width="1" stroke-dasharray="19 9"/>
<path d="M928 660h10M933 655v10" stroke="#333" stroke-width="1"/>
<use href="#cur" x="1142" y="795"/>

<!-- nav bar -->
<rect x="1382.500" y="246.500" width="34" height="116" rx="5" fill="#f3f3f3" stroke="#c0c0c0" stroke-width="2"/>
<circle cx="1409" cy="252" r="3.200" fill="#bbb"/><path d="M1407.500 250.500l3 3M1410.500 250.500l-3 3" stroke="#fff"/>
<g fill="none" stroke="#b8b8b8" stroke-width="1.400"><circle cx="1396" cy="277" r="8.500"/><circle cx="1396" cy="277" r="4.500"/></g>
<text x="1399" y="291" style="font-size:9.500px;font-weight:bold;fill:#6a9fd0">2D</text>
<use href="#tri" x="1398" y="296" opacity=".6"/>
<rect x="1386" y="303" width="26" height="1" fill="#ccc"/>
<rect x="1391" y="312" width="11" height="11" fill="#b6d8a8" stroke="#8ab87a"/>
<circle cx="1402" cy="323" r="3.500" fill="#eee" stroke="#999"/><path d="M1404 326l3 3" stroke="#888" stroke-width="1.400"/>
<use href="#tri" x="1398" y="338" opacity=".6"/>
<circle cx="1409" cy="354" r="3.500" fill="none" stroke="#aaa" stroke-width="1.400"/><path d="M1407 354h4" stroke="#aaa"/>

<!-- Project browser -->
<rect x="1443" y="218" width="1" height="743" fill="#d0d0d0"/>
<text x="1447" y="236" style="fill:#333" textLength="228" lengthAdjust="spacingAndGlyphs">Диспетчер проекта - Семейство1</text>
<path d="M1904 224l10 11M1914 224l-10 11" stroke="#222" stroke-width="2.200"/>
<rect x="1445" y="242" width="466" height="716" fill="#fff"/>
<rect x="1494" y="242" width="80" height="22" fill="#e5e5e5"/>
<g stroke="#888" stroke-width="1" stroke-dasharray="1 1" fill="none"><path d="M1455.500 253V342.500M1455.500 253H1471M1461 275.500H1471M1455.500 298H1471M1461 320H1471M1455.500 342.500H1471"/></g>
<g fill="#eef0f4" stroke="#999"><rect x="1450.500" y="270.500" width="11" height="11"/><rect x="1450.500" y="315.500" width="11" height="11"/></g>
<path d="M1452.500 276h7M1456 272.500v7M1452.500 321h7M1456 317.500v7" stroke="#25408a" stroke-width="1.100"/>
<g stroke="#444" stroke-width="1.600" fill="none"><path d="M1472 248v-5h5M1486 243h5v5M1491 258v5h-5M1477 263h-5v-5"/></g><rect x="1476" y="247" width="10" height="10" rx="2" fill="#eee" stroke="#555" stroke-width="1.400"/>
<path d="M1472.500 266.500h14l4 4v12h-18z" fill="#ddd" stroke="#555" stroke-width="1.400"/><path d="M1477 280v-5h4v5M1483 280v-8h4" fill="none" stroke="#555" stroke-width="1.200"/>
<g fill="#eee" stroke="#555" stroke-width="1.500"><rect x="1472.500" y="288.500" width="11" height="11"/><rect x="1485" y="288.500" width="5" height="17"/><rect x="1472.500" y="301" width="13" height="5"/></g>
<path d="M1476 310h-4v20h4M1486 310h4v20h-4" fill="none" stroke="#444" stroke-width="1.500"/><circle cx="1480" cy="318" r="5.500" fill="#ddd" stroke="#555" stroke-width="1.300"/><circle cx="1483" cy="321" r="5.500" fill="#ccc" stroke="#555" stroke-width="1.300"/>
<g fill="#d8a92c" stroke="#7a5e16" stroke-width="1"><rect x="1472" y="338.500" width="10" height="7.500" rx="3.500"/><rect x="1481" y="338.500" width="10" height="7.500" rx="3.500"/></g>
<text x="1497" y="258.500" style="fill:#111" textLength="74" lengthAdjust="spacingAndGlyphs">Виды (все)</text>
<text x="1497" y="280.500" style="fill:#111" textLength="79" lengthAdjust="spacingAndGlyphs">Листы (все)</text>
<text x="1497" y="303" style="fill:#111" textLength="73" lengthAdjust="spacingAndGlyphs">Семейства</text>
<text x="1497" y="325" style="fill:#111" textLength="51" lengthAdjust="spacingAndGlyphs">Группы</text>
<text x="1497" y="347" style="fill:#111" textLength="164" lengthAdjust="spacingAndGlyphs">Связанные файлы Revit</text>

<rect x="1443" y="961" width="477" height="27" fill="#c9c9c9"/>
<rect x="1629" y="961" width="245" height="27" fill="#eeeeee"/>
<text x="1450" y="979" style="fill:#333" textLength="169" lengthAdjust="spacingAndGlyphs">Family Manager - 25.8.1.2</text>
<text x="1636" y="979" style="fill:#333" textLength="228" lengthAdjust="spacingAndGlyphs">Диспетчер проекта - Семейство1</text>

<!-- status -->
<rect y="988" width="1920" height="29" fill="#c9c9c9"/>
<text x="2" y="1010.500" style="fill:#111" textLength="535" lengthAdjust="spacingAndGlyphs">Щелчок - выбор, TAB - варианты, CTRL - добавление, SHIFT - снятие выбора.</text>
<g fill="#d8a92c" stroke="#7a5e16" stroke-width="1"><rect x="1632" y="997" width="10" height="6" rx="3"/><rect x="1642" y="997" width="10" height="6" rx="3"/></g>
<g fill="#9cc4e8" stroke="#1a6fb5" stroke-width="1.200"><path d="M1663 1010l13-13h6l-4 13z"/><path d="M1664 1005h14M1668 1000h12" fill="none"/></g>
<g fill="#e88a3e" stroke="#a14c16" stroke-width="1"><rect x="1693" y="996" width="10" height="4"/><rect x="1692" y="1001" width="12" height="3" fill="#d85a3a"/><path d="M1698 1004v10"/></g>
<path d="M1724 998l10-3v15l-10 3z" fill="#7db1e0" stroke="#1a6fb5" stroke-width="1.300"/>
<path d="M1757 1001h12M1763 995v12" stroke="#222" stroke-width="1.300"/><g fill="#d02a26"><rect x="1768" y="996" width="8" height="8"/></g>
<use href="#cur" transform="translate(1640 1002) scale(.65)"/><use href="#cur" transform="translate(1675 1002) scale(.65)"/><use href="#cur" transform="translate(1704 1002) scale(.65)"/><use href="#cur" transform="translate(1735 1002) scale(.65)"/><use href="#cur" transform="translate(1765 1003) scale(.65)"/>
<circle cx="1792" cy="1005" r="6" fill="none" stroke="#a8a8a8" stroke-width="3" stroke-dasharray="3 1.500"/>
<path d="M1811 996h19l-7 9v8l-5 3v-11z" fill="#bfc6cc" stroke="#555" stroke-width="1.400"/>
<text x="1831" y="1010" style="font-size:15px;fill:#333" textLength="11" lengthAdjust="spacingAndGlyphs">:0</text>
</svg>
</body></html>
